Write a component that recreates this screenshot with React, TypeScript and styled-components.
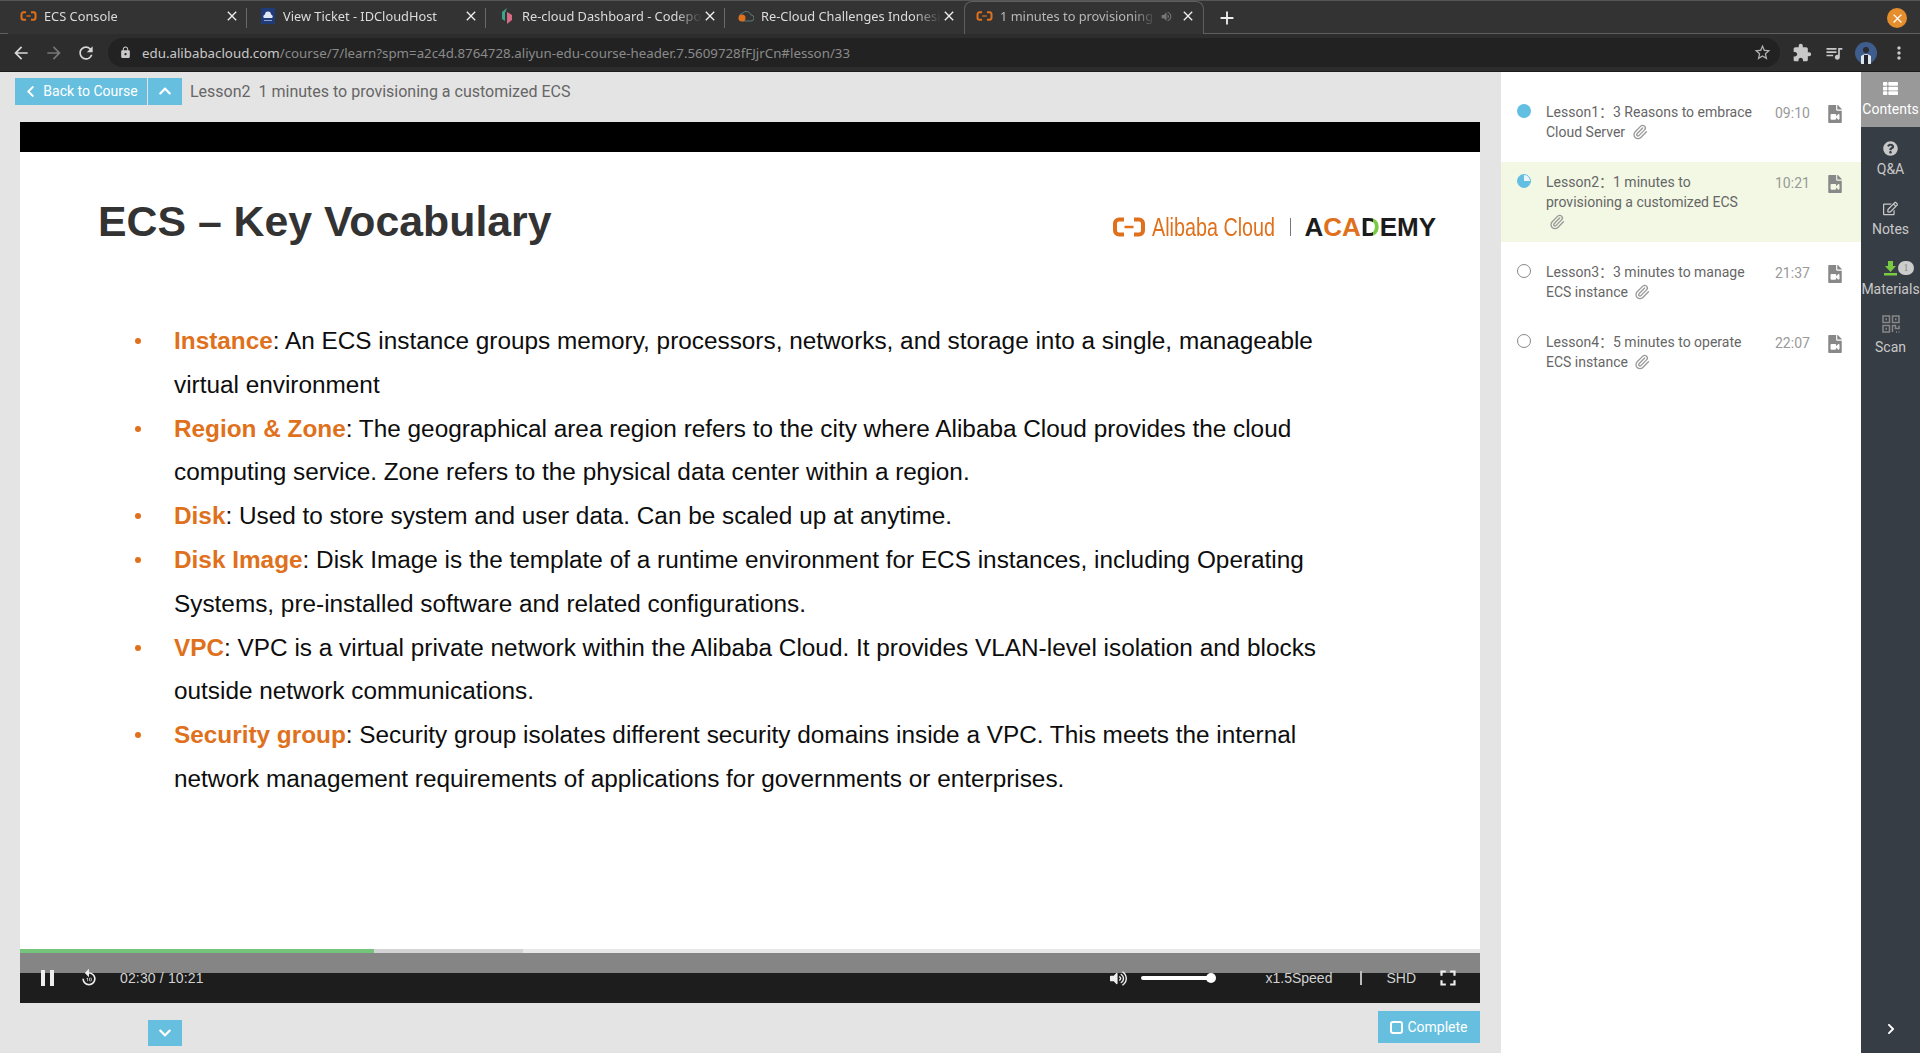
import styled, { createGlobalStyle } from 'styled-components';
import { FaChevronDown, FaChevronLeft, FaChevronRight, FaChevronUp, FaFileVideo, FaQuestionCircle, FaRegEdit, FaThList, FaVolumeUp } from 'react-icons/fa';
import { MdArrowBack, MdArrowForward, MdClose, MdExtension, MdFullscreen, MdLock, MdMoreVert, MdQueueMusic, MdRefresh, MdReplay10, MdStarBorder, MdVolumeUp, MdAdd } from 'react-icons/md';
import { Paperclip } from 'lucide-react';

const Global = createGlobalStyle`
	html, body {
		margin: 0;
		height: 100%;
		overflow: hidden;
		background: #e4e4e4;
	}
	* {
		box-sizing: border-box;
	}
`;

const Window = styled.div`
	display: flex;
	flex-direction: column;
	height: 100vh;
`;

/* browser chrome */
const TabStrip = styled.div`
	display: flex;
	align-items: flex-end;
	height: 34px;
	padding: 1px 0 0 8px;
	background: #333;
	border-top: 1px solid #555;
	box-shadow: inset 0 -1px 0 #5e5e5e;
`;

const Tab = styled.div<{ $active?: boolean; $sep?: boolean }>`
	position: relative;
	display: flex;
	align-items: center;
	flex: none;
	width: ${(p) => (p.$active ? '240px' : '239px')};
	height: 32px;
	padding: 0 7px 4px 12px;
	color: ${(p) => (p.$active ? '#b8b8b8' : '#dcdcdc')};
	font: 12.8px 'Noto Sans', sans-serif;
	background: #333;
	${(p) => p.$active && `
		border: 1px solid #5e5e5e;
		border-bottom: none;
		border-radius: 8px 8px 0 0;
		height: 33px;
		padding-left: 11px;
	`}
	${(p) => p.$sep && `
		&::after {
			content: '';
			position: absolute;
			right: 0;
			top: 6px;
			height: 20px;
			width: 1px;
			background: #6a6a6a;
		}
	`}
`;

const TabIcon = styled.span`
	display: flex;
	align-items: center;
	justify-content: center;
	flex: none;
	width: 17px;
`;

const TabTitle = styled.span`
	flex: 1;
	min-width: 0;
	margin-left: 7px;
	overflow: hidden;
	white-space: nowrap;
	mask-image: linear-gradient(90deg, #000 85%, transparent);
`;

const TabClose = styled(MdClose)`
	flex: none;
	font-size: 16px;
	color: #eee;
`;

const TabAudio = styled(MdVolumeUp)`
	flex: none;
	font-size: 13px;
	margin: 0 7px 0 4px;
	color: #777;
`;

const NewTab = styled(MdAdd)`
	flex: none;
	align-self: center;
	margin-left: 12px;
	font-size: 22px;
	color: #eee;
`;

const CloseWindow = styled.div`
	display: flex;
	align-items: center;
	justify-content: center;
	align-self: center;
	flex: none;
	width: 20px;
	height: 20px;
	margin: 0 13px 0 auto;
	border-radius: 50%;
	background: #e58e2e;
	color: #fff;
	font-size: 15px;
`;

const Toolbar = styled.div`
	display: flex;
	align-items: center;
	height: 38px;
	padding: 0 10px;
	background: #2d2d2d;
	border-bottom: 1px solid #1c1c1c;
	color: #c8c8c8;
`;

const NavIcon = styled.span<{ $dim?: boolean }>`
	display: flex;
	align-items: center;
	justify-content: center;
	flex: none;
	width: 22px;
	margin-right: 10.5px;
	font-size: 20px;
	color: ${(p) => (p.$dim ? '#777' : '#d8d8d8')};
`;

const Omnibox = styled.div`
	display: flex;
	align-items: center;
	flex: none;
	width: 1672px;
	height: 29px;
	margin-left: 0.5px;
	padding: 0 8px 0 11px;
	background: #222;
	border-radius: 15px;
	font: 13.3px 'Noto Sans', sans-serif;
	color: #8a8a8a;
`;

const Host = styled.span`
	color: #c9c9c9;
`;

const Url = styled.span`
	flex: 1;
	margin-left: 10px;
	white-space: nowrap;
`;

const ToolIcon = styled.span<{ $ml: number }>`
	display: flex;
	flex: none;
	margin-left: ${(p) => p.$ml}px;
	font-size: 20px;
	color: #c8c8c8;
`;

const Avatar = styled.svg`
	flex: none;
	margin-left: 11px;
`;

/* page */
const Page = styled.div`
	flex: 1;
	display: flex;
	min-height: 0;
`;

const Main = styled.main`
	flex: none;
	display: flex;
	flex-direction: column;
	width: 1501px;
	padding-right: 21px;
`;

const Header = styled.div`
	display: flex;
	align-items: center;
	height: 50px;
	padding: 0 0 12px 15px;
	font: 16px Roboto, sans-serif;
	color: #666;
`;

const BlueButton = styled.button`
	display: flex;
	align-items: center;
	justify-content: center;
	gap: 6px;
	height: 27px;
	padding: 0;
	margin-right: 1px;
	border: none;
	border-radius: 0;
	background: #66bfdf;
	color: #fff;
	font: 14px Roboto, sans-serif;
`;

const BackButton = styled(BlueButton)`
	width: 132px;
	font-size: 14px;
`;

const SquareButton = styled(BlueButton)`
	width: 34px;
	font-size: 14px;
`;

const LessonTitle = styled.span`
	margin-left: 7px;
	white-space: pre;
`;

const Player = styled.div`
	flex: none;
	display: flex;
	flex-direction: column;
	margin-left: 20px;
	height: 881px;
`;

const BlackBand = styled.div`
	flex: none;
	height: 30px;
	background: #000;
`;

const Slide = styled.div`
	flex: 1;
	padding: 44px 44px 0 78px;
	background: #fff;
	font-family: 'Liberation Sans', Arial, sans-serif;
`;

const SlideHead = styled.div`
	display: flex;
	align-items: flex-start;
	justify-content: space-between;
`;

const SlideTitle = styled.h1`
	margin: 0;
	font-size: 42.8px;
	line-height: 50px;
	font-weight: 700;
	color: #333;
`;

const Logo = styled.div`
	display: flex;
	align-items: center;
	margin-top: 18px;
	height: 26px;
`;

const LogoName = styled.span`
	display: inline-block;
	width: 124px;
	margin-left: 6px;
	font: 26px 'Liberation Sans', sans-serif;
	color: #e0711c;
	white-space: nowrap;
	transform: scaleX(0.76);
	transform-origin: left center;
`;

const LogoBar = styled.span`
	width: 1px;
	height: 18px;
	margin: 0 14px;
	background: #777;
`;

const Academy = styled.span`
	font: 700 26px 'Liberation Sans', sans-serif;
	color: #1c1c1c;
`;

const Accent = styled.span`
	color: #e0711c;
`;

const GreenEdge = styled.span`
	background: linear-gradient(90deg, #1c1c1c 62%, #7ac943 62%);
	background-clip: text;
	color: transparent;
`;

const Bullets = styled.ul`
	margin: 73px 0 0 36px;
	padding: 0;
	list-style: none;
	font-size: 24.35px;
	line-height: 43.8px;
	color: #0d0d0d;
`;

const Bullet = styled.li`
	position: relative;
	padding-left: 40px;
	&::before {
		content: '';
		position: absolute;
		left: 1px;
		top: 19px;
		width: 6px;
		height: 6px;
		border-radius: 50%;
		background: #e0711c;
	}
`;

const Term = styled.b`
	color: #e0711c;
`;

const Progress = styled.div`
	flex: none;
	display: flex;
	height: 4px;
	background: #e8e8e8;
`;

const Played = styled.div`
	width: 354px;
	background: #75c47b;
`;

const Buffered = styled.div`
	width: 149px;
	background: #d4d4d4;
`;

const Controls = styled.div`
	flex: none;
	display: flex;
	align-items: center;
	height: 50px;
	padding: 0 19px 0 21px;
	background: linear-gradient(#858585 20px, #1d1d1d 20px);
	font: 14px 'Liberation Sans', sans-serif;
	color: #d2d2d2;
`;

const PauseIcon = styled.span`
	flex: none;
	width: 13px;
	height: 16px;
	border-left: 4px solid #eee;
	border-right: 4px solid #eee;
`;

const ReplayIcon = styled(MdReplay10)`
	flex: none;
	margin-left: 25px;
	font-size: 20px;
	color: #eee;
`;

const Time = styled.span`
	margin-left: 21px;
	letter-spacing: 0.15px;
`;

const VolumeIcon = styled(FaVolumeUp)`
	flex: none;
	margin-left: auto;
	font-size: 17px;
	color: #eee;
`;

const VolumeSlider = styled.div`
	position: relative;
	flex: none;
	width: 70px;
	height: 4px;
	margin: 0 11px 0 14px;
	border-radius: 2px;
	background: #fff;
	&::after {
		content: '';
		position: absolute;
		right: -5px;
		top: -3px;
		width: 10px;
		height: 10px;
		border-radius: 50%;
		background: #fff;
	}
`;

const Speed = styled.span`
	margin-left: 43px;
`;

const Divider = styled.span`
	width: 2px;
	height: 14px;
	margin: 0 24px 0 28px;
	background: #bbb;
`;

const FullIcon = styled(MdFullscreen)`
	flex: none;
	margin-left: 19px;
	font-size: 26px;
	color: #eee;
`;

const Footer = styled.div`
	flex: 1;
	display: flex;
	align-items: flex-start;
	justify-content: space-between;
	padding: 8px 0 0 148px;
`;

const DownButton = styled(SquareButton)`
	height: 26px;
	margin-top: 9px;
`;

const CompleteButton = styled(BlueButton)`
	width: 102px;
	height: 32px;
	margin: 0;
	gap: 4px;
`;

const CheckBox = styled.span`
	width: 13px;
	height: 13px;
	border: 2px solid #fff;
	border-radius: 3px;
`;

/* lessons */
const Lessons = styled.aside`
	flex: none;
	width: 360px;
	padding-top: 20px;
	background: #fff;
	font: 14px/20px Roboto, 'Noto Sans CJK SC', sans-serif;
	color: #666;
`;

const Lesson = styled.div<{ $active?: boolean }>`
	display: flex;
	align-items: flex-start;
	margin-bottom: 10px;
	padding: 10px 19px 10px 16px;
	background: ${(p) => (p.$active ? '#f2f8e4' : 'transparent')};
`;

const Dot = styled.span<{ $state: 'done' | 'part' | 'todo' }>`
	flex: none;
	width: 14px;
	height: 14px;
	margin-top: 2px;
	border-radius: 50%;
	${(p) => p.$state === 'done' && 'background: #62bfe2;'}
	${(p) => p.$state === 'part' && 'background: conic-gradient(#e9f5fa 0 25%, #62bfe2 25%); border: 1px solid #62bfe2;'}
	${(p) => p.$state === 'todo' && 'border: 1px solid #888;'}
`;

const LessonText = styled.div`
	flex: none;
	width: 210px;
	margin-left: 15px;
`;

const Clip = styled(Paperclip)`
	width: 16px;
	height: 16px;
	margin-left: 3px;
	vertical-align: -3px;
	color: #999;
`;

const Duration = styled.span`
	flex: none;
	width: 34px;
	margin: 1px 17px 0 19px;
	color: #999;
`;

const FileIcon = styled(FaFileVideo)`
	flex: none;
	margin-top: 3px;
	font-size: 18px;
	color: #888;
`;

/* side rail */
const Rail = styled.nav`
	flex: 1;
	display: flex;
	flex-direction: column;
	position: relative;
	background: #373d45;
	font: 14px Roboto, sans-serif;
	color: #c8c8c8;
`;

const RailItem = styled.div<{ $active?: boolean; $tight?: boolean }>`
	display: flex;
	flex-direction: column;
	align-items: center;
	height: ${(p) => (p.$active ? 55 : 60)}px;
	padding-top: ${(p) => (p.$active || p.$tight ? 9 : 14)}px;
	background: ${(p) => (p.$active ? '#999' : 'transparent')};
	color: ${(p) => (p.$active ? '#fff' : '#c8c8c8')};
	white-space: nowrap;
`;

const RailIcon = styled.span<{ $gap?: number }>`
	position: relative;
	display: flex;
	align-items: center;
	justify-content: center;
	height: 15px;
	margin-bottom: ${(p) => p.$gap ?? 5}px;
	font-size: 15px;
`;

const Badge = styled.span`
	position: absolute;
	left: 15px;
	top: 0;
	width: 16px;
	height: 14px;
	border-radius: 7px;
	background: #ccc;
	color: #888;
	font: 10px/14px 'Liberation Serif', serif;
	text-align: center;
`;

const RailNext = styled(FaChevronRight)`
	position: absolute;
	left: 24px;
	bottom: 18px;
	font-size: 12px;
	color: #fff;
`;

const AliyunMark = ({ size = 17 }: { size?: number }) => (
	<svg width={size} height={(size * 20) / 34} viewBox="0 0 34 20" style={{ flex: 'none' }}>
		<path d="M12 2.500H7a4 4 0 0 0-4 4v7a4 4 0 0 0 4 4h5M22 2.500h5a4 4 0 0 1 4 4v7a4 4 0 0 1-4 4h-5" fill="none" stroke="#e0711c" strokeWidth="4" />
		<path d="M12.500 10h9" stroke="#e0711c" strokeWidth="2.500" />
	</svg>
);

const HostFav = () => (
	<svg width="14" height="16" viewBox="0 0 14 16">
		<rect width="14" height="16" fill="#1f3b7a" />
		<path d="M3 10a2 2 0 0 1 1-3.500 3 3 0 0 1 6 0 2 2 0 0 1 1 3.500z" fill="#dfe6f5" />
		<rect x="3" y="12" width="8" height="1" fill="#8fa3d0" />
	</svg>
);

const CodepFav = () => (
	<svg width="16" height="18" viewBox="0 0 16 18">
		<path d="M8 1 3 5v7l3 2V6z" fill="#3aa58e" />
		<path d="M8 5l5 3v5l-5 4z" fill="#d96a86" />
	</svg>
);

const CloudFav = () => (
	<svg width="16" height="12" viewBox="0 0 16 12">
		<path d="M5 11a4 4 0 0 1-.500-7.900A5 5 0 0 1 13 5a3 3 0 0 1 0 6z" fill="none" stroke="#5a7a78" />
		<circle cx="4" cy="8" r="3.500" fill="#e0711c" />
	</svg>
);

const ScanGlyph = () => (
	<svg width="18" height="18" viewBox="0 0 18 18" fill="none" stroke="#888" strokeWidth="1.500">
		<rect x="1" y="1" width="6.500" height="6.500" />
		<rect x="10.500" y="1" width="6.500" height="6.500" />
		<rect x="1" y="10.500" width="6.500" height="6.500" />
		<path d="M10.500 17v-6.500h3v3h3.500V10.500M14 17h1M16.500 17h1" />
		<path d="M3.500 4.200h1.500M13 4.200h1.500M3.500 13.700h1.500" strokeWidth="2" />
	</svg>
);

const lessons = [
	{ n: 1, title: '3 Reasons to embrace Cloud Server', time: '09:10', state: 'done' as const },
	{ n: 2, title: '1 minutes to provisioning a customized ECS', time: '10:21', state: 'part' as const, active: true },
	{ n: 3, title: '3 minutes to manage ECS instance', time: '21:37', state: 'todo' as const },
	{ n: 4, title: '5 minutes to operate ECS instance', time: '22:07', state: 'todo' as const },
];

export default function App() {
	return (
		<Window>
			<Global />
			<TabStrip>
				<Tab $sep>
					<TabIcon><AliyunMark /></TabIcon>
					<TabTitle>ECS Console</TabTitle>
					<TabClose />
				</Tab>
				<Tab $sep>
					<TabIcon><HostFav /></TabIcon>
					<TabTitle>View Ticket - IDCloudHost</TabTitle>
					<TabClose />
				</Tab>
				<Tab $sep>
					<TabIcon><CodepFav /></TabIcon>
					<TabTitle>Re-cloud Dashboard - Codepolitan</TabTitle>
					<TabClose />
				</Tab>
				<Tab>
					<TabIcon><CloudFav /></TabIcon>
					<TabTitle>Re-Cloud Challenges Indonesia</TabTitle>
					<TabClose />
				</Tab>
				<Tab $active>
					<TabIcon><AliyunMark /></TabIcon>
					<TabTitle>1 minutes to provisioning a customized</TabTitle>
					<TabAudio />
					<TabClose />
				</Tab>
				<NewTab />
				<CloseWindow>
					<MdClose />
				</CloseWindow>
			</TabStrip>
			<Toolbar>
				<NavIcon><MdArrowBack /></NavIcon>
				<NavIcon $dim><MdArrowForward /></NavIcon>
				<NavIcon><MdRefresh /></NavIcon>
				<Omnibox>
					<MdLock color="#c9c9c9" size={13} />
					<Url>
						<Host>edu.alibabacloud.com</Host>/course/7/learn?spm=a2c4d.8764728.aliyun-edu-course-header.7.5609728fFJjrCn#lesson/33
					</Url>
					<MdStarBorder color="#b0b0b0" size={19} />
				</Omnibox>
				<ToolIcon $ml={12}><MdExtension /></ToolIcon>
				<ToolIcon $ml={12}><MdQueueMusic /></ToolIcon>
				<Avatar width="22" height="22" viewBox="0 0 22 22">
					<circle cx="11" cy="11" r="11" fill="#3f5d8c" />
					<path d="M6 22v-8q5-4 10 0v8z" fill="#dfe3ea" />
					<circle cx="11" cy="8" r="3" fill="#2a2a30" />
					<rect x="9" y="13" width="4" height="9" fill="#22252c" />
				</Avatar>
				<ToolIcon $ml={12}><MdMoreVert /></ToolIcon>
			</Toolbar>
			<Page>
				<Main>
					<Header>
						<BackButton>
							<FaChevronLeft size={13} />
							Back to Course
						</BackButton>
						<SquareButton>
							<FaChevronUp />
						</SquareButton>
						<LessonTitle>Lesson2  1 minutes to provisioning a customized ECS</LessonTitle>
					</Header>
					<Player>
						<BlackBand />
						<Slide>
							<SlideHead>
								<SlideTitle>ECS – Key Vocabulary</SlideTitle>
								<Logo>
									<AliyunMark size={34} />
									<LogoName>Alibaba Cloud</LogoName>
									<LogoBar />
									<Academy>
										A<Accent>CA</Accent><GreenEdge>D</GreenEdge>EMY
									</Academy>
								</Logo>
							</SlideHead>
							<Bullets>
								<Bullet>
									<Term>Instance</Term>: An ECS instance groups memory, processors, networks, and storage into a single, manageable<br />virtual environment
								</Bullet>
								<Bullet>
									<Term>Region &amp; Zone</Term>: The geographical area region refers to the city where Alibaba Cloud provides the cloud<br />computing service. Zone refers to the physical data center within a region.
								</Bullet>
								<Bullet>
									<Term>Disk</Term>: Used to store system and user data. Can be scaled up at anytime.
								</Bullet>
								<Bullet>
									<Term>Disk Image</Term>: Disk Image is the template of a runtime environment for ECS instances, including Operating<br />Systems, pre-installed software and related configurations.
								</Bullet>
								<Bullet>
									<Term>VPC</Term>: VPC is a virtual private network within the Alibaba Cloud. It provides VLAN-level isolation and blocks<br />outside network communications.
								</Bullet>
								<Bullet>
									<Term>Security group</Term>: Security group isolates different security domains inside a VPC. This meets the internal<br />network management requirements of applications for governments or enterprises.
								</Bullet>
							</Bullets>
						</Slide>
						<Progress>
							<Played />
							<Buffered />
						</Progress>
						<Controls>
							<PauseIcon />
							<ReplayIcon />
							<Time>02:30 / 10:21</Time>
							<VolumeIcon />
							<VolumeSlider />
							<Speed>x1.5Speed</Speed>
							<Divider />
							<span>SHD</span>
							<FullIcon />
						</Controls>
					</Player>
					<Footer>
						<DownButton>
							<FaChevronDown />
						</DownButton>
						<CompleteButton>
							<CheckBox />
							Complete
						</CompleteButton>
					</Footer>
				</Main>
				<Lessons>
					{lessons.map((l) => (
						<Lesson key={l.n} $active={l.active}>
							<Dot $state={l.state} />
							<LessonText lang="zh-CN">
								Lesson{l.n}：{l.title} <Clip />
							</LessonText>
							<Duration>{l.time}</Duration>
							<FileIcon />
						</Lesson>
					))}
				</Lessons>
				<Rail>
					<RailItem $active>
						<RailIcon><FaThList /></RailIcon>
						Contents
					</RailItem>
					<RailItem>
						<RailIcon><FaQuestionCircle /></RailIcon>
						Q&amp;A
					</RailItem>
					<RailItem>
						<RailIcon><FaRegEdit /></RailIcon>
						Notes
					</RailItem>
					<RailItem>
						<RailIcon>
							<svg width="15" height="15" viewBox="0 0 15 15">
								<path d="M5 0h5v5h3l-5.500 6L2 5h3zM1 12h13v2.500H1z" fill="#7ac943" />
							</svg>
							<Badge>1</Badge>
						</RailIcon>
						Materials
					</RailItem>
					<RailItem $tight>
						<RailIcon $gap={8}><ScanGlyph /></RailIcon>
						Scan
					</RailItem>
					<RailNext />
				</Rail>
			</Page>
		</Window>
	);
}
